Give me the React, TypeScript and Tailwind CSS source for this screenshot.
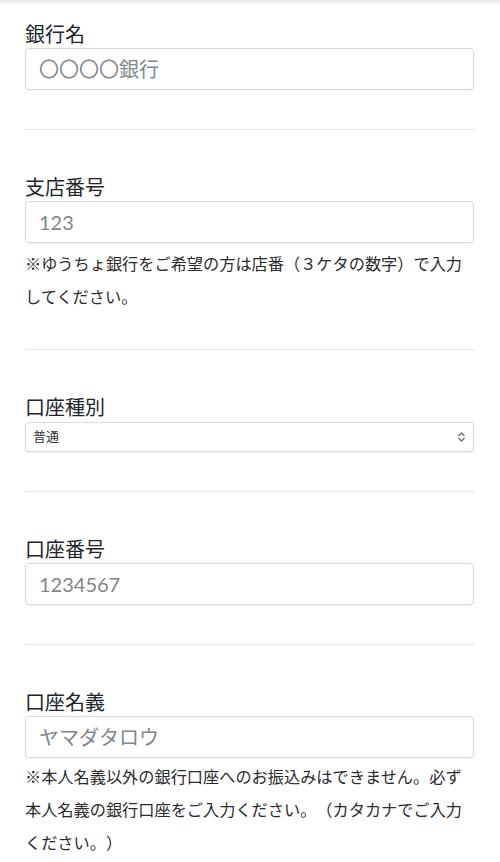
import React from "react";

const FONT = "font-['Lato','Noto_Sans_CJK_JP',sans-serif]";

function Label({ children }: { children: React.ReactNode }) {
  return <div className="text-[20px] leading-[28px] text-[#212529]">{children}</div>;
}

function TextInput({ placeholder }: { placeholder: string }) {
  return (
    <input
      type="text"
      placeholder={placeholder}
      className="block w-[449px] h-[42px] rounded-[4px] border border-[#d9d9d9] bg-white px-[13px] text-[20px] text-[#212529] placeholder:text-[#80868b] shadow-[0_1px_2px_rgba(0,0,0,0.06)] outline-none"
    />
  );
}

function Divider() {
  return <div className="mt-[39px] border-t border-[#e3e3e3]" />;
}

export default function App() {
  return (
    <div className={`min-h-screen bg-white [text-spacing-trim:space-all] ${FONT}`}>
      <div className="h-[6px] bg-gradient-to-b from-[#e9e9e9] to-white" />
      <div className="px-[25px] pt-[14px] pb-4">
        <Label>銀行名</Label>
        <TextInput placeholder="〇〇〇〇銀行" />
        <Divider />

        <div className="mt-[43px]">
          <Label>支店番号</Label>
          <TextInput placeholder="123" />
          <p className="mt-[4px] text-[16.2px] leading-[33px] text-[#2b2b2b]">
            ※ゆうちょ銀行をご希望の方は店番（３ケタの数字）で入力してください。
          </p>
        </div>
        <div className="mt-[36px] border-t border-[#e3e3e3]" />

        <div className="mt-[43px]">
          <Label>口座種別</Label>
          <div className="relative mt-[1px] w-[449px]">
            <select
              defaultValue="普通"
              className="block w-full h-[30px] appearance-none rounded-[4px] border border-[#d9d9d9] bg-white pl-[7px] pr-6 text-[13px] text-[#333] shadow-[0_1px_2px_rgba(0,0,0,0.06)] outline-none"
            >
              <option>普通</option>
              <option>当座</option>
            </select>
            <svg
              className="pointer-events-none absolute right-[8px] top-[10px]"
              width="9"
              height="10"
              viewBox="0 0 9 10"
              fill="none"
              stroke="#6b6b6b"
              strokeWidth="1.3"
            >
              <path d="M1.5 4 L4.5 1 L7.5 4" />
              <path d="M1.5 6 L4.5 9 L7.5 6" />
            </svg>
          </div>
        </div>
        <Divider />

        <div className="mt-[43px]">
          <Label>口座番号</Label>
          <TextInput placeholder="1234567" />
        </div>
        <Divider />

        <div className="mt-[43px]">
          <Label>口座名義</Label>
          <TextInput placeholder="ヤマダタロウ" />
          <p className="mt-[2px] text-[16.2px] leading-[33px] text-[#2b2b2b]">
            ※本人名義以外の銀行口座へのお振込みはできません。必ず本人名義の銀行口座をご入力ください。（カタカナでご入力ください。）
          </p>
        </div>
      </div>
    </div>
  );
}
